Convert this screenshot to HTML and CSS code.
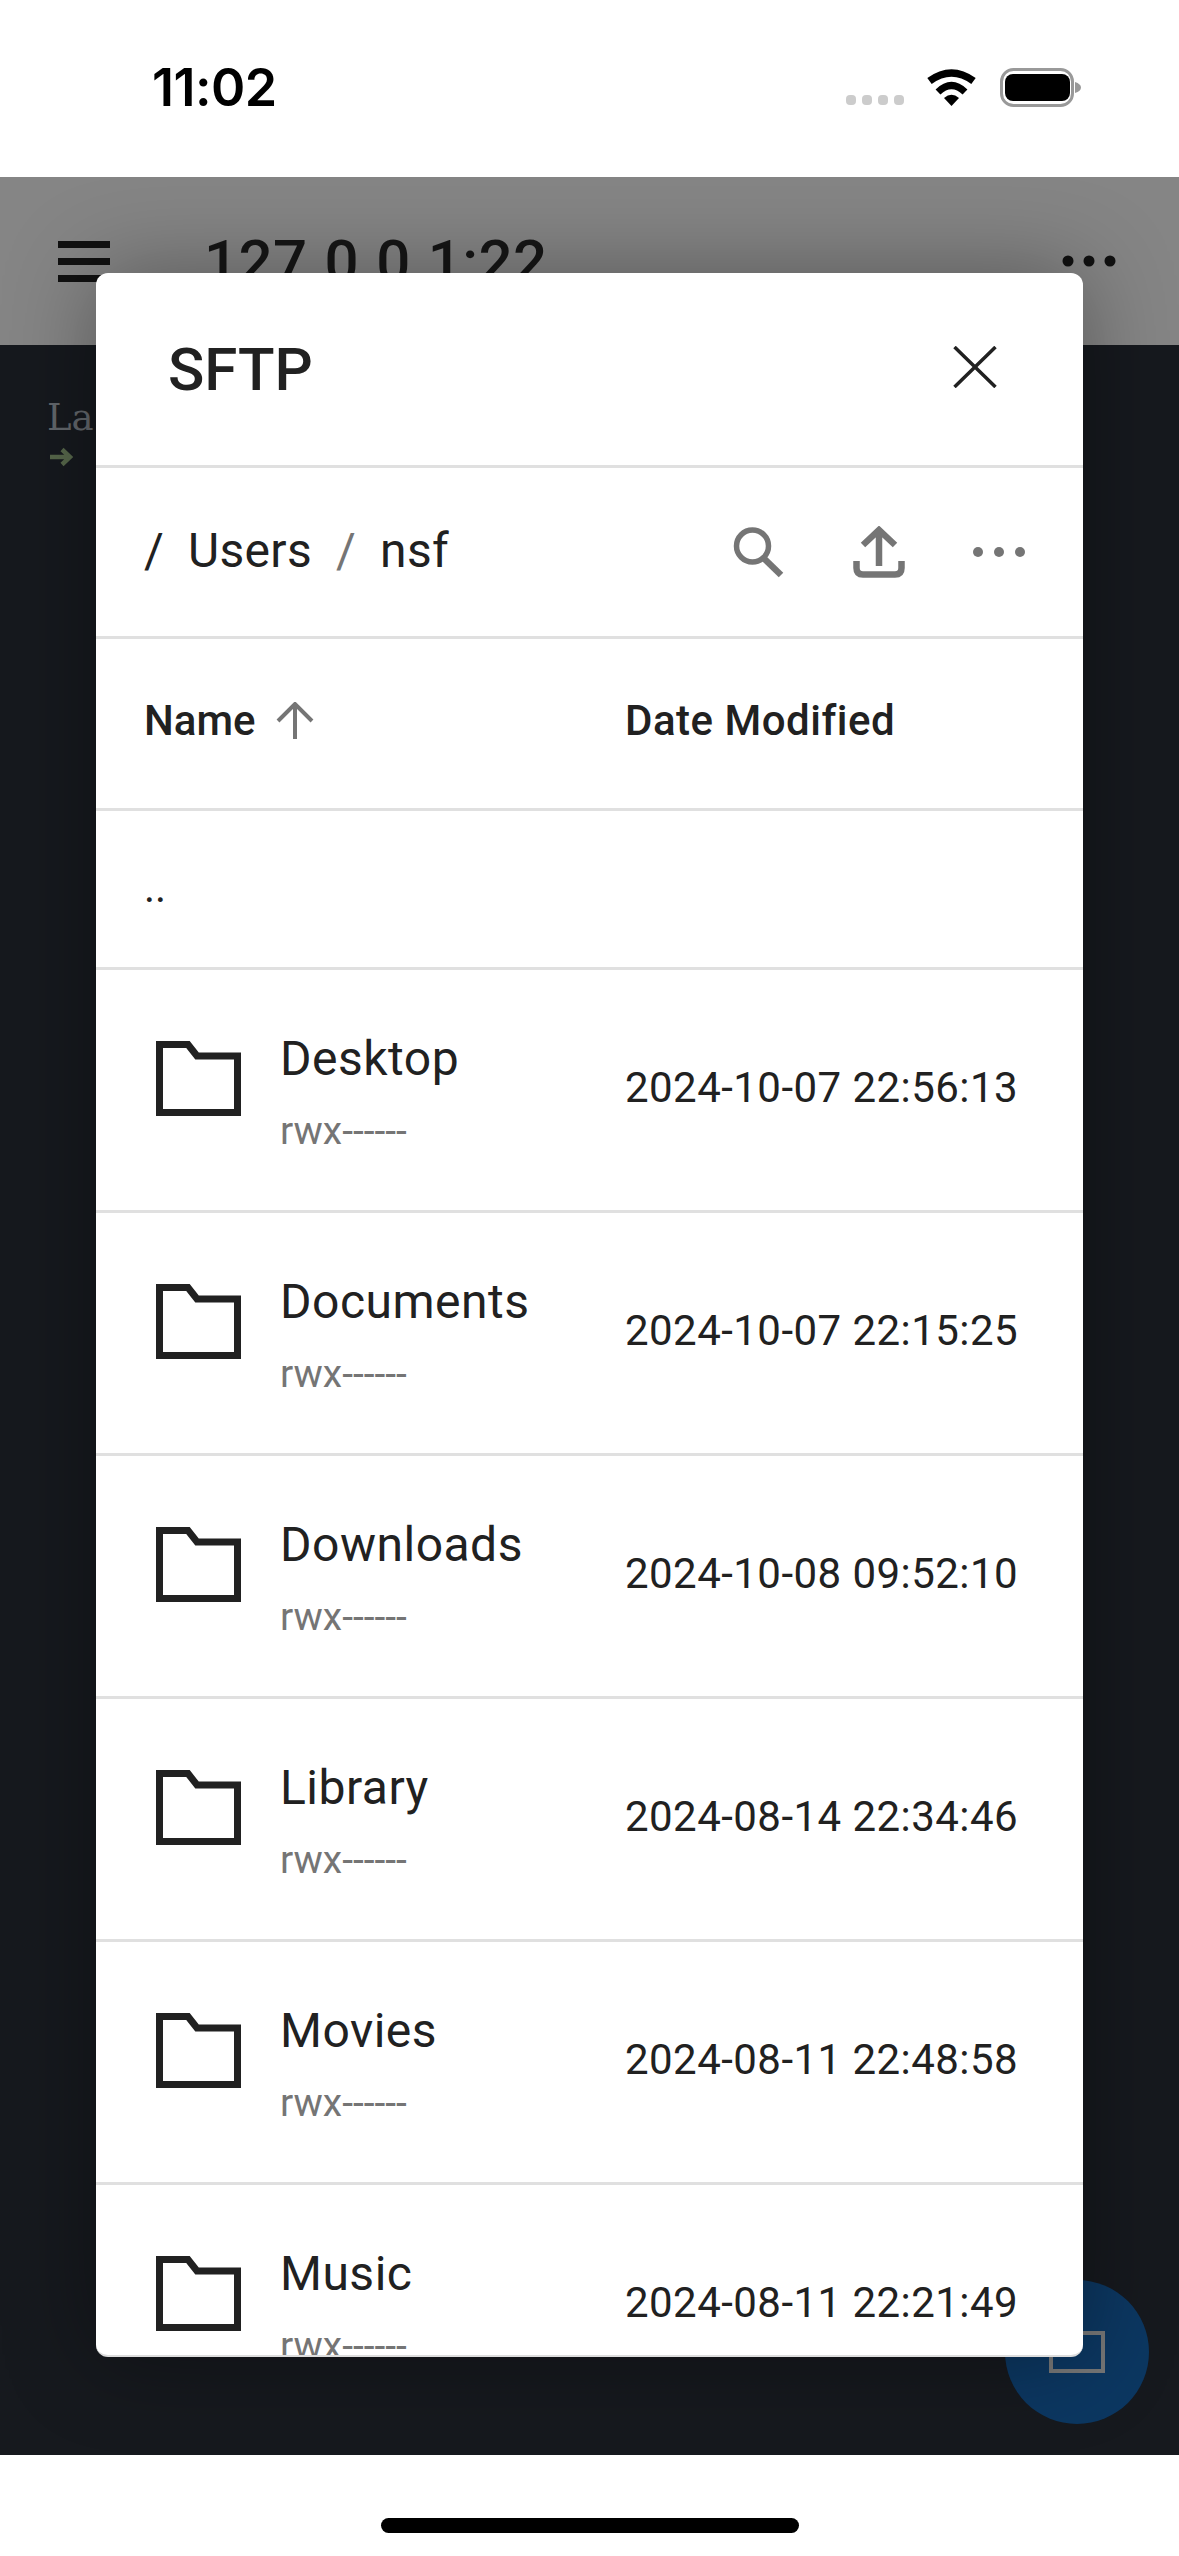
FILE: index.html
```html
<!DOCTYPE html>
<html lang="en">
<head>
    <meta charset="UTF-8">
    <meta name="viewport" content="width=device-width, initial-scale=1.0">
    <title>SFTP</title>
    <link rel="stylesheet" href="styles.css">
</head>
<body>
    <!-- iOS status bar -->
    <div class="status-bar">
        <span class="clock">11:02</span>
        <div class="status-icons">
            <svg class="signal" width="58" height="12" viewBox="0 0 58 12"><rect x="0" y="1" width="10" height="10" rx="4" /><rect x="16" y="1" width="10" height="10" rx="4" /><rect x="32" y="1" width="10" height="10" rx="4" /><rect x="48" y="1" width="10" height="10" rx="4" /></svg>
            <svg class="wifi" width="52" height="38" viewBox="0 0 52 38"><path d="M3.5 13Q25.5 -3 47.5 13" fill="none" stroke="#000" stroke-width="7.5" /><path d="M12 24Q25.5 11 39 24" fill="none" stroke="#000" stroke-width="7" /><path d="M18 30Q25.5 23.5 33 30L25.5 38Z" fill="#000" /></svg>
            <svg class="battery" width="81" height="39" viewBox="0 0 81 39"><rect x="1.5" y="1.5" width="71" height="36" rx="12" fill="none" stroke="#999" stroke-width="3" /><rect x="5" y="6" width="65" height="27" rx="8" fill="#000" /><path d="M75 14Q81 16 81 19.5Q81 23 75 25Z" fill="#999" /></svg>
        </div>
    </div>

    <div class="app-bar">
        <div class="hamburger"><i></i><i></i><i></i></div>
        <span class="host">127.0.0.1:22</span>
        <svg class="app-more" width="54" height="12" viewBox="0 0 54 12"><circle cx="6" cy="6" r="5.5" /><circle cx="27" cy="6" r="5.5" /><circle cx="48" cy="6" r="5.5" /></svg>
    </div>

    <!-- Terminal -->
    <div class="terminal">
        <div class="term-line">La</div>
        <svg class="term-arrow" width="24" height="20" viewBox="0 0 24 20"><path d="M1 10H21M13 2.5L21 10L13 17.5" fill="none" stroke="#56664a" stroke-width="4.5" /></svg>
    </div>

    <div class="fab"><span class="fab-square"></span></div>

    <div class="home-area"><div class="home-bar"></div></div>

    <!-- SFTP dialog -->
    <div class="modal">
        <div class="modal-head">
            <h1>SFTP</h1>
            <svg width="44" height="42" viewBox="0 0 44 42"><path d="M1.5 1L42.5 41M42.5 1L1.5 41" fill="none" stroke="#212121" stroke-width="3.5" /></svg>
        </div>

        <div class="path-bar">
            <div class="crumbs">
                <span>/</span>
                <span>Users</span>
                <span class="sep">/</span>
                <span>nsf</span>
            </div>
            <div class="tools">
                <svg width="52" height="52" viewBox="0 0 52 52"><circle cx="19.500" cy="20" r="16" fill="none" stroke="#757575" stroke-width="5.500" /><path d="M30 31.500L48 49" fill="none" stroke="#757575" stroke-width="6.500" /></svg>
                <svg width="52" height="52" viewBox="0 0 52 52"><path d="M26 40V4M10 19L26 4L42 19" fill="none" stroke="#757575" stroke-width="6.5" /><path d="M3.500 35V42Q3.500 48.500 10 48.500H42Q48.500 48.500 48.500 42V35" fill="none" stroke="#757575" stroke-width="6.500" /></svg>
                <svg width="52" height="12" viewBox="0 0 52 12"><circle cx="5" cy="6" r="5" /><circle cx="26" cy="6" r="5" /><circle cx="47" cy="6" r="5" /></svg>
            </div>
        </div>

        <div class="col-head">
            <div class="col-name">
                <span>Name</span>
                <svg width="38" height="37" viewBox="0 0 38 37"><path d="M19 37V2M2 19L19 2L36 19" fill="none" stroke="#757575" stroke-width="4" /></svg>
            </div>
            <span>Date Modified</span>
        </div>

        <div class="parent-row">..</div>

        <div class="file-row">
            <svg class="folder" width="85" height="75" viewBox="0 0 85 75"><path d="M3.500 3.500H32L41 15H81.500V71.500H3.500Z" fill="none" stroke="#212121" stroke-width="7" /></svg>
            <div class="file-info"><div class="file-name">Desktop</div><div class="file-perm">rwx------</div></div>
            <div class="file-date">2024-10-07 22:56:13</div>
        </div>
        <div class="file-row">
            <svg class="folder" width="85" height="75" viewBox="0 0 85 75"><path d="M3.500 3.500H32L41 15H81.500V71.500H3.500Z" fill="none" stroke="#212121" stroke-width="7" /></svg>
            <div class="file-info"><div class="file-name">Documents</div><div class="file-perm">rwx------</div></div>
            <div class="file-date">2024-10-07 22:15:25</div>
        </div>
        <div class="file-row">
            <svg class="folder" width="85" height="75" viewBox="0 0 85 75"><path d="M3.500 3.500H32L41 15H81.500V71.500H3.500Z" fill="none" stroke="#212121" stroke-width="7" /></svg>
            <div class="file-info"><div class="file-name">Downloads</div><div class="file-perm">rwx------</div></div>
            <div class="file-date">2024-10-08 09:52:10</div>
        </div>
        <div class="file-row">
            <svg class="folder" width="85" height="75" viewBox="0 0 85 75"><path d="M3.500 3.500H32L41 15H81.500V71.500H3.500Z" fill="none" stroke="#212121" stroke-width="7" /></svg>
            <div class="file-info"><div class="file-name">Library</div><div class="file-perm">rwx------</div></div>
            <div class="file-date">2024-08-14 22:34:46</div>
        </div>
        <div class="file-row">
            <svg class="folder" width="85" height="75" viewBox="0 0 85 75"><path d="M3.500 3.500H32L41 15H81.500V71.500H3.500Z" fill="none" stroke="#212121" stroke-width="7" /></svg>
            <div class="file-info"><div class="file-name">Movies</div><div class="file-perm">rwx------</div></div>
            <div class="file-date">2024-08-11 22:48:58</div>
        </div>
        <div class="file-row">
            <svg class="folder" width="85" height="75" viewBox="0 0 85 75"><path d="M3.500 3.500H32L41 15H81.500V71.500H3.500Z" fill="none" stroke="#212121" stroke-width="7" /></svg>
            <div class="file-info"><div class="file-name">Music</div><div class="file-perm">rwx------</div></div>
            <div class="file-date">2024-08-11 22:21:49</div>
        </div>
    </div>
</body>
</html>
```

FILE: styles.css
```css
/* Page frame */
* {
    box-sizing: border-box;
}
html, body {
    margin: 0;
    height: 100%;
}
body {
    position: relative;
    display: flex;
    flex-direction: column;
    width: 1179px;
    height: 2556px;
    overflow: hidden;
    background-color: #fff;
    font-family: Roboto, "Liberation Sans", sans-serif;
    color: #212121;
}

/* Status bar */
.status-bar {
    position: relative;
    z-index: 3;
    display: flex;
    justify-content: space-between;
    align-items: flex-start;
    height: 177px;
    padding: 68px 98px 0 152px;
    background-color: #fff;
}
.clock {
    font-family: Inter, sans-serif;
    font-size: 52px;
    font-weight: 600;
    line-height: 39px;
    letter-spacing: -0.5px;
    color: #000;
}
.status-icons {
    display: flex;
    align-items: flex-end;
    gap: 22px;
    height: 39px;
}
.signal {
    fill: #ccc;
    margin-bottom: 1px;
}
.wifi {
    margin-bottom: 1px;
}

/* App bar */
.app-bar {
    display: flex;
    align-items: center;
    height: 168px;
    padding: 0 63px 0 58px;
    background-color: #858585;
}
.hamburger {
    display: flex;
    flex-direction: column;
    gap: 10px;
    width: 52px;
}
.hamburger i {
    display: block;
    height: 7px;
    background-color: #111;
}
.host {
    flex: 1;
    margin-left: 94px;
    font-size: 60px;
    font-weight: 500;
    letter-spacing: 0.4px;
    color: #161616;
}
.app-more {
    fill: #111;
}

/* Terminal */
.terminal {
    flex: 1;
    padding: 52px 0 0 47px;
    background-color: #16191e;
}
.term-line {
    font-family: "DejaVu Serif", "Liberation Mono", monospace;
    font-size: 37px;
    line-height: 41px;
    color: #62666b;
}
.term-arrow {
    display: block;
    margin: 9px 0 0 2px;
}
.fab {
    position: absolute;
    left: 1005px;
    top: 2280px;
    display: flex;
    align-items: center;
    justify-content: center;
    width: 144px;
    height: 144px;
    border-radius: 50%;
    background-color: #0c3761;
}
.fab-square {
    width: 56px;
    height: 42px;
    border: 4px solid #777;
}

/* Home indicator */
.home-area {
    display: flex;
    justify-content: center;
    height: 101px;
    padding-top: 63px;
    background-color: #fff;
}
.home-bar {
    width: 418px;
    height: 15px;
    border-radius: 8px;
    background-color: #000;
}

/* Dialog */
.modal {
    position: absolute;
    z-index: 2;
    left: 96px;
    top: 273px;
    width: 987px;
    height: 2084px;
    overflow: hidden;
    border-bottom: 2px solid #ddd;
    border-radius: 12px;
    background-color: #fff;
    box-shadow: 0 0 90px rgba(0, 0, 0, 0.35);
}
.modal-head {
    display: flex;
    justify-content: space-between;
    align-items: center;
    height: 195px;
    padding: 0 86px 4px 72px;
    border-bottom: 3px solid #e0e0e0;
}
.modal-head h1 {
    margin: 0;
    padding-top: 5px;
    font-size: 60px;
    font-weight: 500;
}
.path-bar {
    display: flex;
    justify-content: space-between;
    align-items: center;
    height: 171px;
    padding: 0 58px 0 48px;
    border-bottom: 3px solid #e0e0e0;
}
.crumbs {
    display: flex;
    gap: 24px;
    margin-bottom: 3px;
    font-size: 48px;
    letter-spacing: 0.3px;
}
.sep {
    color: #757575;
}
.tools {
    display: flex;
    align-items: center;
    gap: 68px;
    fill: #757575;
}
.col-head {
    display: flex;
    align-items: center;
    height: 172px;
    padding: 0 0 6px 48px;
    border-bottom: 3px solid #e0e0e0;
    font-size: 42px;
    font-weight: 500;
    letter-spacing: 0.5px;
}
.col-name {
    display: flex;
    align-items: center;
    gap: 20px;
    width: 481px;
    letter-spacing: 0;
}
.parent-row {
    height: 159px;
    padding: 52px 0 0 48px;
    border-bottom: 3px solid #e0e0e0;
    font-size: 42px;
}
.file-row {
    display: flex;
    align-items: center;
    flex-shrink: 0;
    height: 243px;
    padding-left: 60px;
    border-bottom: 3px solid #e0e0e0;
}
.folder {
    flex-shrink: 0;
    margin: 0 39px 23px 0;
}
.file-info {
    width: 345px;
}
.file-name {
    font-size: 48px;
    line-height: 64px;
    letter-spacing: 0.5px;
    margin-bottom: 3px;
}
.file-perm {
    margin-top: 17px;
    font-size: 39px;
    line-height: 46px;
    color: #757575;
}
.file-date {
    margin-bottom: 6px;
    font-size: 42px;
    letter-spacing: 0.45px;
}
```
